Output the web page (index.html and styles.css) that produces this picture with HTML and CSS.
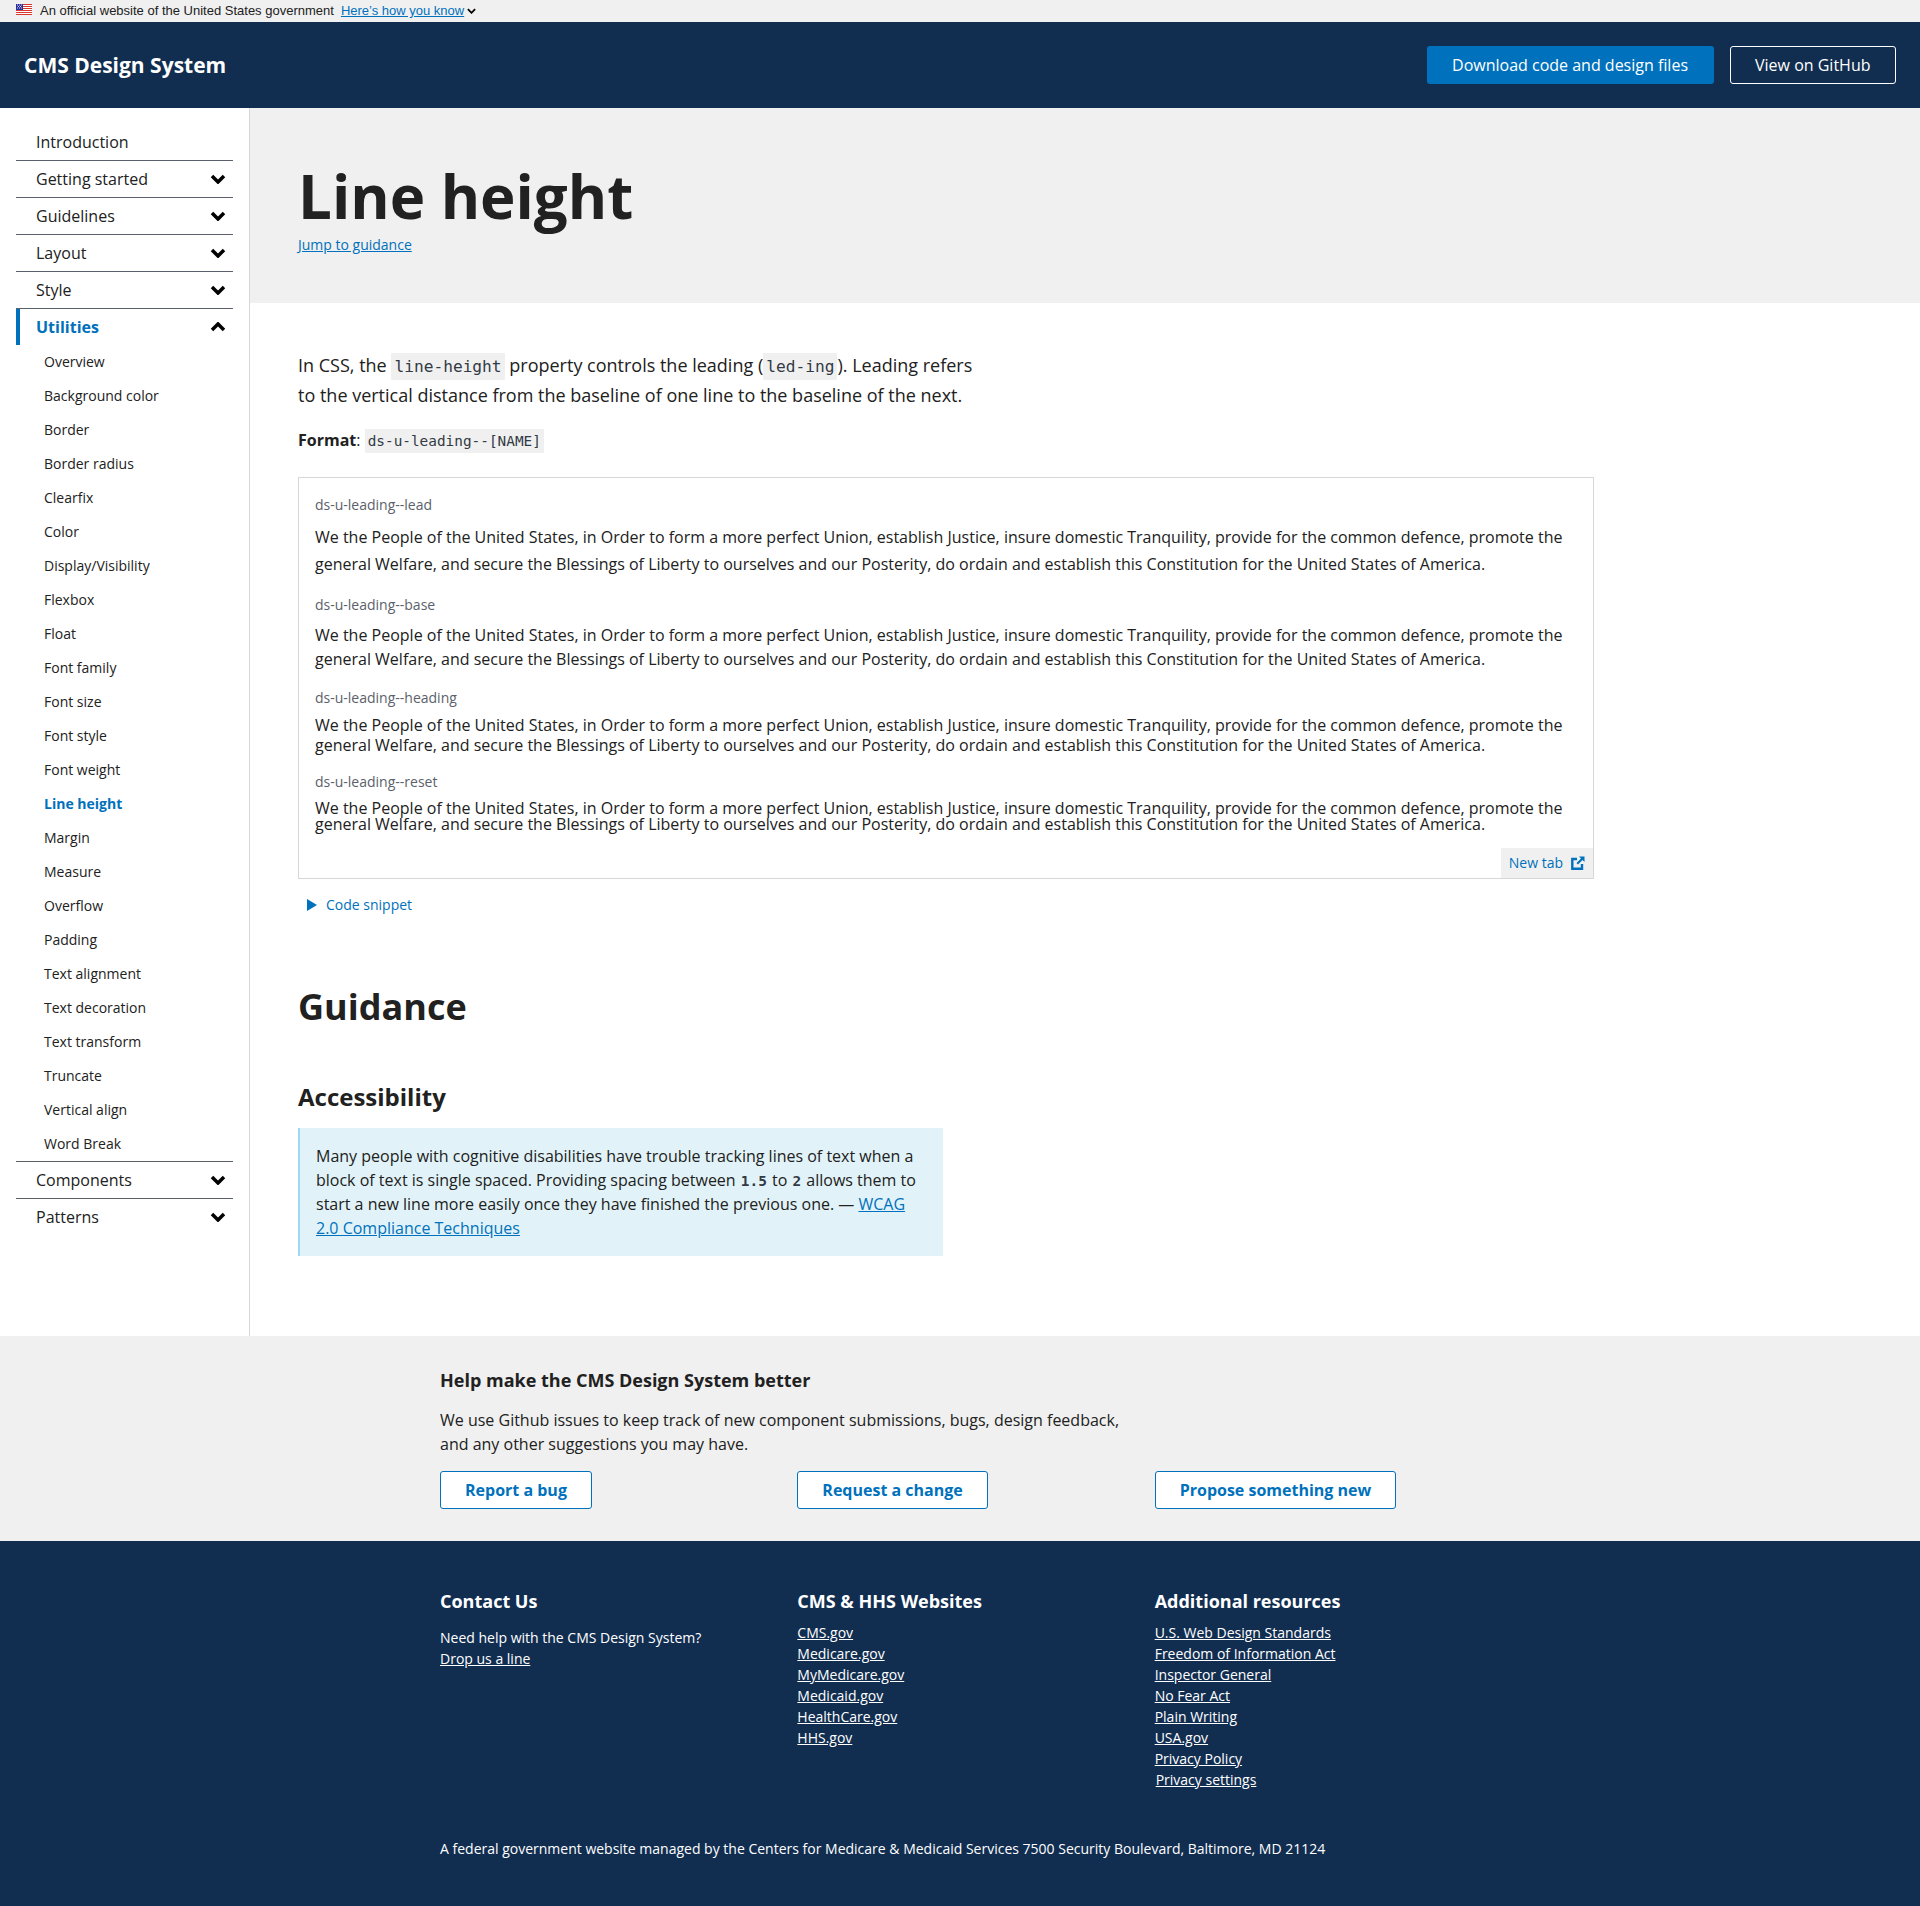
FILE: index.html
```html
<!DOCTYPE html>
<html lang="en">
<head>
  <meta charset="UTF-8">
  <meta name="viewport" content="width=device-width, initial-scale=1.0">
  <title>Line height</title>
  <link rel="stylesheet" href="styles.css">
</head>
<body>
  <div class="usa-banner">
    <svg class="flag" viewBox="0 0 16 11" width="16" height="11">
      <rect width="16" height="11" fill="#fff"/>
      <path d="M0 .5h16M0 2.500h16M0 4.500h16M0 6.500h16M0 8.500h16M0 10.500h16" stroke="#d8372f" stroke-width="1"/>
      <rect width="7" height="6" fill="#2a2f9e"/>
      <path d="M1 1h1M3 1h1M5 1h1M2 2.500h1M4 2.500h1M1 4h1M3 4h1M5 4h1" stroke="#fff" stroke-width=".8"/>
    </svg>
    <span>An official website of the United States government</span>
    <a href="#" class="banner-link">Here’s how you know</a>
    <svg class="banner-caret" viewBox="0 0 10 6" width="9" height="6"><path d="M1 1l4 4 4-4" fill="none" stroke="#000" stroke-width="2"/></svg>
  </div>

  <header class="site-header">
    <div class="site-title">CMS Design System</div>
    <div class="header-actions">
      <a href="#" class="btn btn-primary">Download code and design files</a>
      <a href="#" class="btn btn-inverse">View on GitHub</a>
    </div>
  </header>

  <div class="layout">
    <!-- Sidebar -->
    <nav class="sidebar">
      <ul class="nav-list">
        <li class="nav-item"><a href="#">Introduction</a></li>
        <li class="nav-item"><a href="#">Getting started</a><svg class="chevron" viewBox="0 0 16 10"><path d="M2 2l6 6 6-6"/></svg></li>
        <li class="nav-item"><a href="#">Guidelines</a><svg class="chevron" viewBox="0 0 16 10"><path d="M2 2l6 6 6-6"/></svg></li>
        <li class="nav-item"><a href="#">Layout</a><svg class="chevron" viewBox="0 0 16 10"><path d="M2 2l6 6 6-6"/></svg></li>
        <li class="nav-item"><a href="#">Style</a><svg class="chevron" viewBox="0 0 16 10"><path d="M2 2l6 6 6-6"/></svg></li>
        <li class="nav-item nav-item-open">
          <div class="nav-current"><a href="#">Utilities</a><svg class="chevron" viewBox="0 0 16 10"><path d="M2 8l6-6 6 6"/></svg></div>
          <ul class="subnav">
            <li><a href="#">Overview</a></li>
            <li><a href="#">Background color</a></li>
            <li><a href="#">Border</a></li>
            <li><a href="#">Border radius</a></li>
            <li><a href="#">Clearfix</a></li>
            <li><a href="#">Color</a></li>
            <li><a href="#">Display/Visibility</a></li>
            <li><a href="#">Flexbox</a></li>
            <li><a href="#">Float</a></li>
            <li><a href="#">Font family</a></li>
            <li><a href="#">Font size</a></li>
            <li><a href="#">Font style</a></li>
            <li><a href="#">Font weight</a></li>
            <li><a href="#" class="subnav-current">Line height</a></li>
            <li><a href="#">Margin</a></li>
            <li><a href="#">Measure</a></li>
            <li><a href="#">Overflow</a></li>
            <li><a href="#">Padding</a></li>
            <li><a href="#">Text alignment</a></li>
            <li><a href="#">Text decoration</a></li>
            <li><a href="#">Text transform</a></li>
            <li><a href="#">Truncate</a></li>
            <li><a href="#">Vertical align</a></li>
            <li><a href="#">Word Break</a></li>
          </ul>
        </li>
        <li class="nav-item"><a href="#">Components</a><svg class="chevron" viewBox="0 0 16 10"><path d="M2 2l6 6 6-6"/></svg></li>
        <li class="nav-item nav-item-last"><a href="#">Patterns</a><svg class="chevron" viewBox="0 0 16 10"><path d="M2 2l6 6 6-6"/></svg></li>
      </ul>
    </nav>

    <main class="main">
      <div class="hero">
        <h1>Line height</h1>
        <a href="#guidance" class="jump-link">Jump to guidance</a>
      </div>

      <div class="content">
        <p class="lead">In CSS, the <code>line-height</code> property controls the leading (<code>led-ing</code>). Leading refers to the vertical distance from the baseline of one line to the baseline of the next.</p>
        <p class="format"><strong>Format</strong>: <code>ds-u-leading--[NAME]</code></p>

        <div class="example">
          <div class="example-label label-lead">ds-u-leading--lead</div>
          <p class="leading-lead">We the People of the United States, in Order to form a more perfect Union, establish Justice, insure domestic Tranquility, provide for the common defence, promote the general Welfare, and secure the Blessings of Liberty to ourselves and our Posterity, do ordain and establish this Constitution for the United States of America.</p>
          <div class="example-label label-base">ds-u-leading--base</div>
          <p class="leading-base">We the People of the United States, in Order to form a more perfect Union, establish Justice, insure domestic Tranquility, provide for the common defence, promote the general Welfare, and secure the Blessings of Liberty to ourselves and our Posterity, do ordain and establish this Constitution for the United States of America.</p>
          <div class="example-label label-heading">ds-u-leading--heading</div>
          <p class="leading-heading">We the People of the United States, in Order to form a more perfect Union, establish Justice, insure domestic Tranquility, provide for the common defence, promote the general Welfare, and secure the Blessings of Liberty to ourselves and our Posterity, do ordain and establish this Constitution for the United States of America.</p>
          <div class="example-label label-reset">ds-u-leading--reset</div>
          <p class="leading-reset">We the People of the United States, in Order to form a more perfect Union, establish Justice, insure domestic Tranquility, provide for the common defence, promote the general Welfare, and secure the Blessings of Liberty to ourselves and our Posterity, do ordain and establish this Constitution for the United States of America.</p>
          <a href="#" class="new-tab">New tab
            <svg viewBox="0 0 14 14" width="14" height="14"><path d="M11 8v4.700H1.300V3H6" fill="none" stroke="#0071bc" stroke-width="2.400"/><path d="M8 0.500h5.500V6L11.500 4 7 8.500 5.500 7 10 2.500z" fill="#0071bc"/></svg>
          </a>
        </div>

        <div class="snippet"><span class="snippet-arrow"></span><a href="#">Code snippet</a></div>

        <h2 id="guidance">Guidance</h2>
        <h3>Accessibility</h3>
        <div class="callout">
          Many people with cognitive disabilities have trouble tracking lines of text when a block of text is single spaced. Providing spacing between <code>1.5</code> to <code>2</code> allows them to start a new line more easily once they have finished the previous one. — <a href="#">WCAG 2.0 Compliance Techniques</a>
        </div>
      </div>
    </main>
  </div>

  <section class="help">
    <div class="footer-inner">
      <h4>Help make the CMS Design System better</h4>
      <p>We use Github issues to keep track of new component submissions, bugs, design feedback, and any other suggestions you may have.</p>
      <div class="footer-grid help-actions">
        <div><a href="#" class="btn btn-outline">Report a bug</a></div>
        <div><a href="#" class="btn btn-outline">Request a change</a></div>
        <div><a href="#" class="btn btn-outline">Propose something new</a></div>
      </div>
    </div>
  </section>

  <footer class="site-footer">
    <div class="footer-inner">
      <div class="footer-grid">
        <div>
          <h5>Contact Us</h5>
          <p class="contact-text">Need help with the CMS Design System?<br><a href="#">Drop us a line</a></p>
        </div>
        <div>
          <h5>CMS &amp; HHS Websites</h5>
          <ul class="footer-links">
            <li><a href="#">CMS.gov</a></li>
            <li><a href="#">Medicare.gov</a></li>
            <li><a href="#">MyMedicare.gov</a></li>
            <li><a href="#">Medicaid.gov</a></li>
            <li><a href="#">HealthCare.gov</a></li>
            <li><a href="#">HHS.gov</a></li>
          </ul>
        </div>
        <div>
          <h5>Additional resources</h5>
          <ul class="footer-links">
            <li><a href="#">U.S. Web Design Standards</a></li>
            <li><a href="#">Freedom of Information Act</a></li>
            <li><a href="#">Inspector General</a></li>
            <li><a href="#">No Fear Act</a></li>
            <li><a href="#">Plain Writing</a></li>
            <li><a href="#">USA.gov</a></li>
            <li><a href="#">Privacy Policy</a></li>
            <li class="privacy-settings"><a href="#">Privacy settings</a></li>
          </ul>
        </div>
      </div>
      <p class="footer-note">A federal government website managed by the Centers for Medicare &amp; Medicaid Services 7500 Security Boulevard, Baltimore, MD 21124</p>
    </div>
  </footer>
</body>
</html>
```

FILE: styles.css
```css
* {
  margin: 0;
  padding: 0;
  box-sizing: border-box;
}

body {
  font-family: 'Open Sans', sans-serif;
  font-size: 16px;
  line-height: 24px;
  color: #212121;
  background-color: #fff;
}

ul {
  list-style: none;
}

a {
  color: #0071bc;
}

code {
  font-family: 'DejaVu Sans Mono', monospace;
  font-size: 0.9em;
}

/* Gov banner */
.usa-banner {
  height: 22px;
  padding-left: 16px;
  display: flex;
  align-items: center;
  background-color: #f0f0f0;
  font-family: 'Liberation Sans', sans-serif;
  font-size: 13px;
  line-height: 16px;
  color: #212121;
}

.flag {
  margin-right: 8px;
  margin-top: -3px;
}

.banner-link {
  margin-left: 7px;
}

.banner-caret {
  margin-left: 3px;
}

/* Header */
.site-header {
  height: 86px;
  padding: 0 24px;
  display: flex;
  justify-content: space-between;
  align-items: center;
  background-color: #112e51;
}

.site-title {
  font-size: 21px;
  font-weight: 700;
  color: #fff;
}

.header-actions {
  display: flex;
  gap: 16px;
}

.btn {
  display: inline-block;
  height: 38px;
  padding: 0 24px;
  border-radius: 3px;
  font-size: 16px;
  line-height: 36px;
  text-decoration: none;
  border: 1px solid transparent;
}

.header-actions .btn {
  padding: 0 24.5px;
}

.btn-primary {
  background-color: #0071bc;
  color: #fff;
}

.btn-inverse {
  border-color: #fff;
  color: #fff;
}

.btn-outline {
  background-color: #fff;
  border-color: #0071bc;
  color: #0071bc;
  font-weight: 700;
}

/* Layout */
.layout {
  display: flex;
  height: 1228px;
}

.sidebar {
  width: 250px;
  flex-shrink: 0;
  padding: 16px 16px 0;
  border-right: 1px solid #d6d7d9;
}

.nav-item {
  position: relative;
  border-bottom: 1px solid #5b616b;
}

.nav-item > a,
.nav-current > a {
  display: block;
  height: 36px;
  padding-left: 20px;
  line-height: 36px;
  color: #212121;
  text-decoration: none;
}

.nav-item-last {
  border-bottom: none;
}

.nav-current {
  position: relative;
  border-left: 4px solid #0071bc;
}

.nav-current > a {
  padding-left: 16px;
  color: #0071bc;
  font-weight: 700;
}

.chevron {
  position: absolute;
  top: 13px;
  right: 7px;
  width: 16px;
  height: 10px;
  fill: none;
  stroke: #000;
  stroke-width: 3.5;
}

.subnav li {
  height: 34px;
  padding-left: 28px;
  font-size: 14px;
  line-height: 34px;
}

.subnav a {
  color: #212121;
  text-decoration: none;
}

.subnav .subnav-current {
  color: #0071bc;
  font-weight: 700;
}

/* Main */
.main {
  flex: 1;
  min-width: 0;
}

.hero {
  height: 195px;
  padding: 52px 48px 0;
  background-color: #f0f0f0;
}

.hero h1 {
  font-size: 60px;
  line-height: 72px;
  font-weight: 700;
  color: #212121;
}

.jump-link {
  display: block;
  margin-top: 3px;
  font-size: 14px;
  line-height: 20px;
}

.content {
  padding: 48px 48px 0;
}

.lead {
  width: 684px;
  font-size: 18px;
  line-height: 29px;
}

.lead code,
.format code {
  padding: 4px 3px;
  background-color: #f0f0f0;
  color: #323a45;
}

.format {
  margin-top: 18px;
}

/* Example box */
.example {
  position: relative;
  width: 1296px;
  height: 402px;
  margin-top: 24px;
  padding: 17px 16px 16px;
  border: 1px solid #d6d7d9;
}

.example-label {
  margin-top: 17px;
  font-size: 14px;
  line-height: 20px;
  color: #5b616b;
}

.label-lead {
  margin-top: 0;
  margin-bottom: 9px;
}

.label-base {
  margin-bottom: 8px;
}

.label-heading {
  margin-bottom: 7px;
}

.label-reset {
  margin-bottom: 8px;
}

.leading-lead {
  line-height: 27.2px;
}

.leading-base {
  line-height: 24px;
}

.leading-heading {
  line-height: 20px;
}

.leading-reset {
  line-height: 16px;
}

.new-tab {
  position: absolute;
  right: 0;
  bottom: 0;
  height: 30px;
  padding: 0 8px;
  display: flex;
  align-items: center;
  gap: 8px;
  background-color: #f0f0f0;
  font-size: 14px;
  text-decoration: none;
}

.snippet {
  margin-top: 14px;
  padding-left: 9px;
  display: flex;
  align-items: center;
  gap: 9px;
  font-size: 14px;
}

.snippet a {
  text-decoration: none;
}

.snippet-arrow {
  width: 0;
  height: 0;
  border-left: 10px solid #0071bc;
  border-top: 6px solid transparent;
  border-bottom: 6px solid transparent;
}

h2 {
  margin-top: 66px;
  font-size: 36px;
  line-height: 48px;
  font-weight: 700;
}

h3 {
  margin-top: 50px;
  font-size: 24px;
  line-height: 32px;
  font-weight: 700;
}

.callout {
  width: 645px;
  margin-top: 15px;
  padding: 16px;
  border-left: 2px solid #9bdaf1;
  background-color: #e1f3f8;
}

.callout code {
  padding: 0 1px;
  font-weight: 700;
  line-height: 1;
  color: #323a45;
}

/* Help section */
.help {
  height: 205px;
  padding-top: 32px;
  background-color: #f0f0f0;
}

.footer-inner {
  width: 1072px;
  margin-left: 440px;
}

.help h4 {
  font-size: 18px;
  line-height: 24px;
  font-weight: 700;
}

.help p {
  width: 700px;
  margin-top: 16px;
}

.footer-grid {
  display: grid;
  grid-template-columns: repeat(3, 1fr);
}

.help-actions {
  margin-top: 15px;
}

/* Dark footer */
.site-footer {
  height: 365px;
  padding-top: 48px;
  background-color: #112e51;
  color: #fff;
}

.site-footer a {
  color: #fff;
}

.site-footer h5 {
  font-size: 18px;
  line-height: 24px;
  font-weight: 700;
}

.contact-text {
  margin-top: 14px;
  font-size: 14px;
  line-height: 21px;
}

.footer-links {
  margin-top: 9px;
  font-size: 14px;
  line-height: 21px;
}

.privacy-settings {
  padding-left: 1px;
}

.footer-note {
  margin-top: 48px;
  font-size: 14px;
  line-height: 21px;
}
```
